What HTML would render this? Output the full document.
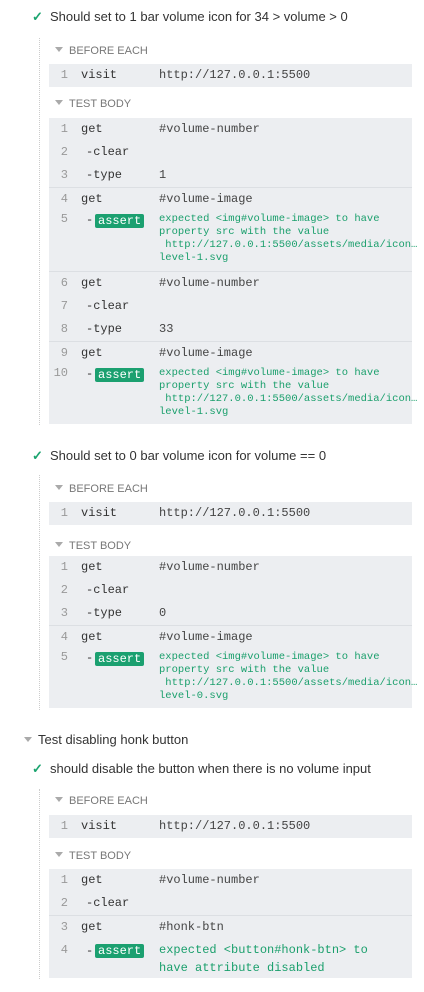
<!DOCTYPE html>
<html><head><meta charset="utf-8"><style>
*{margin:0;padding:0;box-sizing:border-box}
body{width:424px;height:992px;background:#fff;position:relative;overflow:hidden;font-family:"Liberation Sans",sans-serif;color:#333}
div{position:absolute;white-space:nowrap}
.t{font-size:13px;color:#333;line-height:16px}
.chk{color:#1ba46f;font-size:13px;font-weight:bold;line-height:16px}
.h{font-size:11px;color:#777;line-height:14px}
.h:before{content:"";display:inline-block;width:0;height:0;border-left:4px solid transparent;border-right:4px solid transparent;border-top:5px solid #aaa;margin-right:6px;vertical-align:2px}
.dl{border-left:1px dotted #ccc;width:0}
.p{background:#eceef1;left:49px;width:363px}
.sep{background:#dcdfe3;left:49px;width:363px;height:1px}
.n{left:52px;width:16px;text-align:right;font-family:"Liberation Mono",monospace;font-size:12px;color:#999;line-height:16px}
.c{left:81px;font-family:"Liberation Mono",monospace;font-size:12px;color:#333;line-height:16px}
.v{left:159px;font-family:"Liberation Mono",monospace;font-size:12px;color:#444;line-height:16px}
.a{left:159px;font-family:"Liberation Mono",monospace;font-size:10.5px;color:#1a9f6c;line-height:13px}
.m{left:86px;font-family:"Liberation Mono",monospace;font-size:12px;color:#333;line-height:16px}
.b{left:95px;background:#1ba070;color:#fff;padding:0 3px;border-radius:2px;font-family:"Liberation Mono",monospace;font-size:12px;line-height:14px}
</style></head><body>

<div class="chk" style="left:32px;top:9px">✓</div>
<div class="t" style="left:50px;top:9px">Should set to 1 bar volume icon for 34 &gt; volume &gt; 0</div>
<div class="dl" style="left:39px;top:38px;height:387px"></div>
<div class="h" style="left:55px;top:44px">BEFORE EACH</div>
<div class="p" style="top:64px;height:23px"></div>
<div class="n" style="top:67px">1</div><div class="c" style="top:67px">visit</div><div class="v" style="top:67px">http://127.0.0.1:5500</div>
<div class="h" style="left:55px;top:97px">TEST BODY</div>
<div class="p" style="top:118px;height:306px"></div>
<div class="sep" style="top:187px"></div><div class="sep" style="top:271px"></div><div class="sep" style="top:341px"></div>
<div class="n" style="top:121px">1</div><div class="c" style="top:121px">get</div><div class="v" style="top:121px">#volume-number</div>
<div class="n" style="top:144px">2</div><div class="m" style="top:144px">-clear</div>
<div class="n" style="top:167px">3</div><div class="m" style="top:167px">-type</div><div class="v" style="top:167px">1</div>
<div class="n" style="top:191px">4</div><div class="c" style="top:191px">get</div><div class="v" style="top:191px">#volume-image</div>
<div class="n" style="top:211px">5</div><div class="m" style="top:212px">-</div><div class="b" style="top:214px">assert</div>
<div class="a" style="top:213px">expected &lt;img#volume-image&gt; to have<br>property src with the value<br>&nbsp;http://127.0.0.1:5500/assets/media/icon…<br>level-1.svg</div>
<div class="n" style="top:275px">6</div><div class="c" style="top:275px">get</div><div class="v" style="top:275px">#volume-number</div>
<div class="n" style="top:298px">7</div><div class="m" style="top:298px">-clear</div>
<div class="n" style="top:321px">8</div><div class="m" style="top:321px">-type</div><div class="v" style="top:321px">33</div>
<div class="n" style="top:345px">9</div><div class="c" style="top:345px">get</div><div class="v" style="top:345px">#volume-image</div>
<div class="n" style="top:365px">10</div><div class="m" style="top:366px">-</div><div class="b" style="top:368px">assert</div>
<div class="a" style="top:367px">expected &lt;img#volume-image&gt; to have<br>property src with the value<br>&nbsp;http://127.0.0.1:5500/assets/media/icon…<br>level-1.svg</div>

<div class="chk" style="left:32px;top:448px">✓</div>
<div class="t" style="left:50px;top:448px">Should set to 0 bar volume icon for volume == 0</div>
<div class="dl" style="left:39px;top:475px;height:235px"></div>
<div class="h" style="left:55px;top:482px">BEFORE EACH</div>
<div class="p" style="top:502px;height:23px"></div>
<div class="n" style="top:505px">1</div><div class="c" style="top:505px">visit</div><div class="v" style="top:505px">http://127.0.0.1:5500</div>
<div class="h" style="left:55px;top:539px">TEST BODY</div>
<div class="p" style="top:556px;height:152px"></div>
<div class="sep" style="top:625px"></div>
<div class="n" style="top:559px">1</div><div class="c" style="top:559px">get</div><div class="v" style="top:559px">#volume-number</div>
<div class="n" style="top:582px">2</div><div class="m" style="top:582px">-clear</div>
<div class="n" style="top:605px">3</div><div class="m" style="top:605px">-type</div><div class="v" style="top:605px">0</div>
<div class="n" style="top:629px">4</div><div class="c" style="top:629px">get</div><div class="v" style="top:629px">#volume-image</div>
<div class="n" style="top:649px">5</div><div class="m" style="top:650px">-</div><div class="b" style="top:652px">assert</div>
<div class="a" style="top:651px">expected &lt;img#volume-image&gt; to have<br>property src with the value<br>&nbsp;http://127.0.0.1:5500/assets/media/icon…<br>level-0.svg</div>

<div class="t" style="left:24px;top:732px"><span style="display:inline-block;border-left:4px solid transparent;border-right:4px solid transparent;border-top:5px solid #aaa;vertical-align:2px;margin-right:6px"></span>Test disabling honk button</div>
<div class="chk" style="left:32px;top:761px">✓</div>
<div class="t" style="left:50px;top:761px">should disable the button when there is no volume input</div>
<div class="dl" style="left:39px;top:789px;height:190px"></div>
<div class="h" style="left:55px;top:794px">BEFORE EACH</div>
<div class="p" style="top:815px;height:23px"></div>
<div class="n" style="top:818px">1</div><div class="c" style="top:818px">visit</div><div class="v" style="top:818px">http://127.0.0.1:5500</div>
<div class="h" style="left:55px;top:849px">TEST BODY</div>
<div class="p" style="top:869px;height:109px"></div>
<div class="sep" style="top:915px"></div>
<div class="n" style="top:872px">1</div><div class="c" style="top:872px">get</div><div class="v" style="top:872px">#volume-number</div>
<div class="n" style="top:895px">2</div><div class="m" style="top:895px">-clear</div>
<div class="n" style="top:919px">3</div><div class="c" style="top:919px">get</div><div class="v" style="top:919px">#honk-btn</div>
<div class="n" style="top:942px">4</div><div class="m" style="top:943px">-</div><div class="b" style="top:944px">assert</div>
<div class="a" style="top:941px;font-size:12px;line-height:18px">expected &lt;button#honk-btn&gt; to<br>have attribute disabled</div>
</body></html>
